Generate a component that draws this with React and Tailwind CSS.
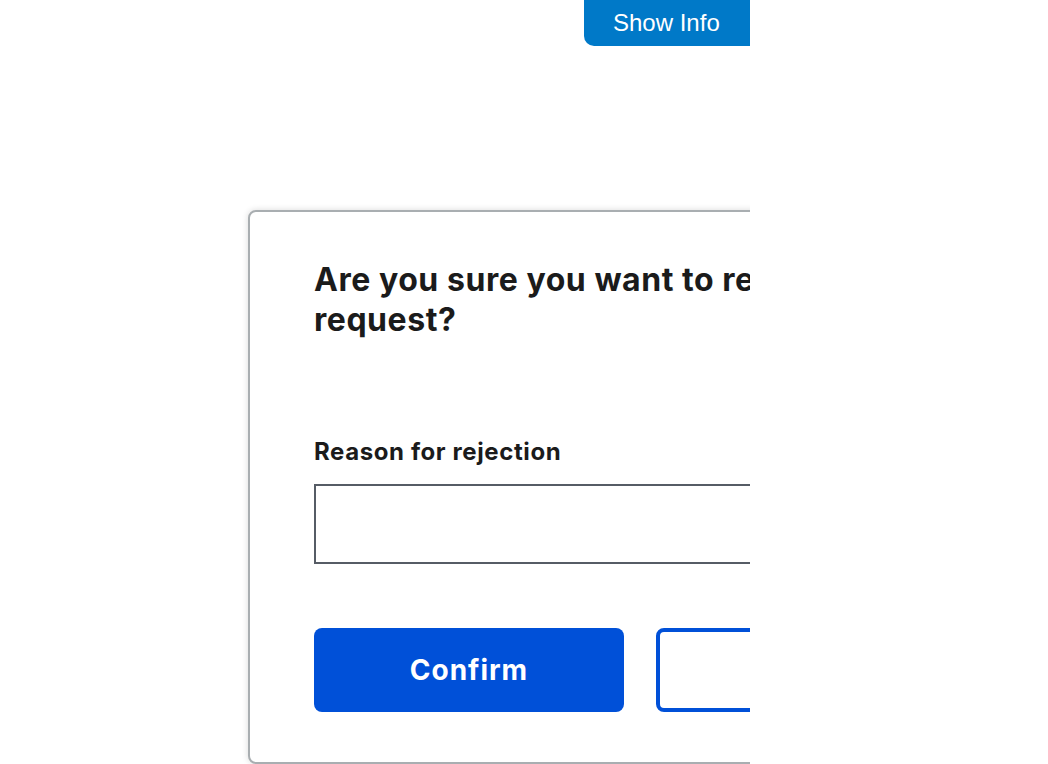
export default function App() {
  return (
    <div className="w-[750px] h-[764px] overflow-hidden bg-white" style={{ fontFamily: "Inter, 'Noto Sans', sans-serif" }}>
      <div className="flex">
        <button
          className="ml-[584px] shrink-0 w-[200px] h-[46px] bg-[#0079c8] text-white text-[24px] rounded-bl-[10px] text-left pl-[29px]"
          style={{ fontFamily: "'Liberation Sans', Arial, sans-serif" }}
        >
          Show Info
        </button>
      </div>
      <div className="ml-[248px] mt-[164px] w-[786px] shrink-0 border-2 border-[#a9aeb1] rounded-lg shadow-[0_0_6px_rgba(0,0,0,0.15)] bg-white pt-[48px] pb-[50px] px-[64px]">
        <h2 className="text-[32px] leading-[40px] font-bold text-[#1b1b1b] tracking-[0.017em]">
          Are you sure you want to reject this request?
        </h2>
        <label className="block mt-[96px] text-[24px] leading-[32px] font-bold text-[#1b1b1b] tracking-[0.025em]" htmlFor="reason">
          Reason for rejection
        </label>
        <textarea
          id="reason"
          className="block mt-[16px] w-full h-[80px] border-2 border-[#565c65] resize-none outline-none"
        />
        <div className="flex gap-[32px] mt-[64px]">
          <button className="w-[310px] h-[84px] rounded-lg bg-[#0050d8] text-white text-[28px] font-bold tracking-[0.035em]">
            Confirm
          </button>
          <button className="w-[310px] h-[84px] rounded-lg border-4 border-[#0050d8] text-[#0050d8] text-[28px] font-bold tracking-[0.035em]">
            Cancel
          </button>
        </div>
      </div>
    </div>
  );
}
